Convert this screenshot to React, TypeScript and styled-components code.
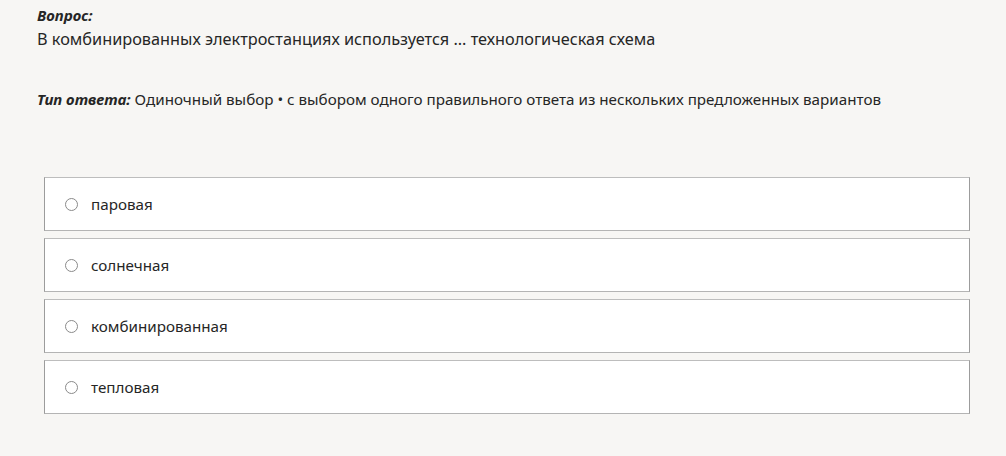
import styled, { createGlobalStyle } from "styled-components";

const GlobalStyle = createGlobalStyle`
    html, body {
        margin: 0;
        padding: 0;
        background: #f7f6f4;
    }
    body {
        font-family: "Noto Sans", "Open Sans", sans-serif;
        color: #262626;
    }
`;

const Page = styled.div`
    width: 1006px;
    height: 456px;
    padding: 5px 36px 0 37px;
    box-sizing: border-box;
`;

const Label = styled.span`
    font-weight: 700;
    font-style: italic;
    font-size: 15px;
`;

const LabelLine = styled.div`
    line-height: 20px;
`;

const Question = styled.p`
    margin: 3px 0 0;
    font-size: 16.3px;
    line-height: 22px;
`;

const AnswerType = styled.p`
    margin: 38px 0 0;
    font-size: 15.2px;
    line-height: 22px;
`;

const Options = styled.ul`
    list-style: none;
    margin: 67px 0 0 7px;
    padding: 0;
    width: 926px;
    display: flex;
    flex-direction: column;
    gap: 7px;
`;

const Option = styled.li`
    height: 54px;
    box-sizing: border-box;
    background: #fff;
    border: 1px solid #9c9c9c;
    border-top-color: #bdbdbd;
    border-bottom-color: #b4b4b4;
    display: flex;
    align-items: center;
    padding-left: 20px;
    gap: 13px;
    font-size: 15.2px;
`;

const Radio = styled.span`
    width: 13px;
    height: 13px;
    border-radius: 50%;
    border: 1px solid #8a8a8a;
    box-sizing: border-box;
    flex: none;
`;

const answers = ["паровая", "солнечная", "комбинированная", "тепловая"];

function App() {
    return <>
        <GlobalStyle />
        <Page>
            <LabelLine><Label>Вопрос:</Label></LabelLine>
            <Question>В комбинированных электростанциях используется ... технологическая схема</Question>
            <AnswerType>
                <Label>Тип ответа:</Label> Одиночный выбор • с выбором одного правильного ответа из нескольких предложенных вариантов
            </AnswerType>
            <Options>
                {answers.map((answer) =>
                    <Option key={answer}>
                        <Radio />
                        {answer}
                    </Option>
                )}
            </Options>
        </Page>
    </>
}

export default App;
